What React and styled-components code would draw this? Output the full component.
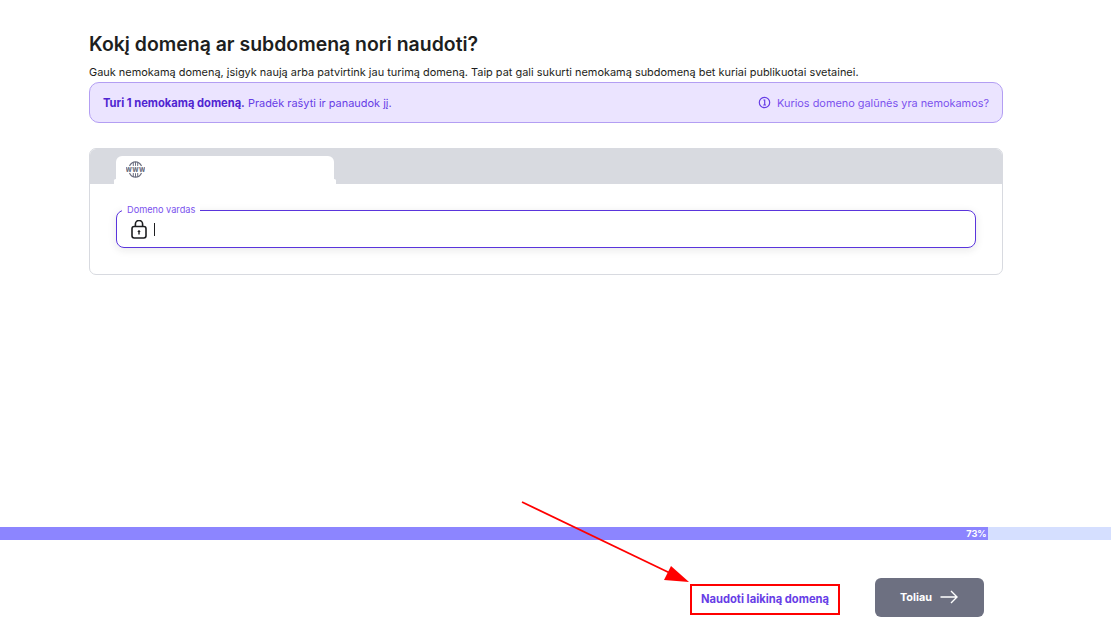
import React from "react";
import styled, { createGlobalStyle } from "styled-components";

const GlobalStyle = createGlobalStyle`
  html, body {
    margin: 0;
    padding: 0;
    background: #fff;
    font-family: "Inter", "Liberation Sans", sans-serif;
  }
  * { box-sizing: border-box; }
`;

const Page = styled.div`
  position: relative;
  height: 632px;
  display: flex;
  flex-direction: column;
  overflow: hidden;
`;

const Main = styled.main`
  flex: 1;
  padding: 32px 108px 0 89px;
`;

const Title = styled.h1`
  margin: 0;
  height: 25px;
  font-size: 19.45px;
  line-height: 25px;
  font-weight: 600;
  color: #1d1e20;
`;

const Subtitle = styled.p`
  margin: 8px 0 0;
  height: 17px;
  font-size: 10.95px;
  line-height: 15px;
  color: #1d1e20;
  white-space: nowrap;
`;

const Alert = styled.div`
  height: 41px;
  display: flex;
  align-items: center;
  justify-content: space-between;
  padding: 0 13px;
  background: #ebe4ff;
  border: 1px solid #b39ef3;
  border-radius: 10px;
  font-size: 10.95px;
  color: #673de6;
`;

const AlertText = styled.span`
  strong {
    font-size: 11.15px;
    font-weight: 700;
    color: #5025d1;
  }
`;

const AlertLink = styled.a`
  display: flex;
  align-items: center;
  gap: 6px;
  color: #7b52ee;
  font-size: 10.9px;
`;

const Card = styled.section`
  margin-top: 25px;
  height: 127px;
  border: 1px solid #d8dae0;
  border-radius: 7px;
  overflow: hidden;
`;

const TabBar = styled.div`
  height: 35px;
  padding: 7px 0 0 26px;
  background: #d8dae0;
`;

const Tab = styled.div`
  position: relative;
  width: 218px;
  height: 29px;
  padding: 4px 0 0 10px;
  background: #fff;
  border-radius: 6px 6px 0 0;

  &::before,
  &::after {
    content: "";
    position: absolute;
    bottom: 0;
    width: 3px;
    height: 6px;
    background: #fff;
    border-radius: 3px 3px 0 0;
  }
  &::before { left: -2px; }
  &::after { right: -2px; }
`;

const CardBody = styled.div`
  padding: 26px 26px 0;
`;

const Field = styled.div`
  position: relative;
  height: 38px;
  display: flex;
  align-items: center;
  gap: 7px;
  padding-left: 14px;
  border: 1px solid #5a35dc;
  border-radius: 8px;
  box-shadow: 0 2px 8px rgba(29, 30, 32, 0.1);
`;

const FieldLabel = styled.label`
  position: absolute;
  top: -7px;
  left: 5px;
  padding: 0 5px;
  background: #fff;
  font-size: 9.2px;
  line-height: 12px;
  color: #7b52ee;
`;

const Caret = styled.span`
  width: 1px;
  height: 13px;
  background: #1d1e20;
`;

const Progress = styled.div`
  height: 13px;
  background: #d5dfff;
`;

const ProgressFill = styled.div`
  height: 100%;
  padding-right: 1px;
  background: #8c85ff;
  color: #fff;
  font-size: 9.2px;
  line-height: 13px;
  font-weight: 700;
  text-align: right;
`;

const Footer = styled.footer`
  height: 92px;
  display: flex;
  align-items: flex-start;
  justify-content: flex-end;
  gap: 35px;
  padding: 38px 127px 0 0;
`;

const LaterLink = styled.a`
  width: 150px;
  height: 31px;
  margin-top: 6px;
  padding-bottom: 2px;
  display: flex;
  align-items: center;
  justify-content: center;
  border: 2px solid #f00;
  color: #673de6;
  font-size: 11.2px;
  font-weight: 700;
`;

const NextButton = styled.button`
  width: 109px;
  height: 39px;
  display: flex;
  align-items: center;
  justify-content: center;
  gap: 8px;
  padding: 0 1px 2px 0;
  border: 0;
  border-radius: 6px;
  background: #6d7081;
  color: #fff;
  font-family: inherit;
  font-size: 10.9px;
  font-weight: 700;
`;

const Annotation = styled.svg`
  position: absolute;
  left: 0;
  top: 0;
  pointer-events: none;
`;

const InfoIcon = () => (
  <svg width="13" height="13" viewBox="0 0 13 13" fill="none" stroke="#673de6">
    <circle cx="6.5" cy="6.5" r="5.2" strokeWidth="1.2" />
    <path d="M5.4 4h1.3v5M5.2 9h2.8" strokeWidth="1.2" />
  </svg>
);

const WwwIcon = () => (
  <svg width="19" height="19" viewBox="0 0 19 19" fill="none" stroke="#6d7081">
    <path d="M3.500 6C4.700 3.400 6.900 1.800 9.500 1.800s4.800 1.600 6 4.200M3.500 13c1.200 2.600 3.400 4.200 6 4.200s4.800-1.600 6-4.200" strokeWidth="1.200" />
    <path d="M7.300 6V2M11.700 6V2M9.500 5.800V1.800M7.300 13v4M11.700 13v4M9.500 13.200v4" strokeWidth="1" />
    <text x="9.500" y="11.800" textAnchor="middle" fontSize="6" letterSpacing="0.2" fontWeight="800" fill="#6d7081" stroke="none" fontFamily="Inter, sans-serif">WWW</text>
  </svg>
);

const LockIcon = () => (
  <svg width="16" height="19" viewBox="0 0 16 19" fill="none" stroke="#1d1e20">
    <rect x="1" y="6.500" width="14" height="11.500" rx="2.200" strokeWidth="1.600" />
    <path d="M4.400 6.500V4a3.600 3.600 0 0 1 7.200 0v2.500" strokeWidth="1.600" />
    <path d="M8 11.500v3" strokeWidth="1.400" />
    <path d="M6.300 12 8 9.700 9.700 12z" fill="#1d1e20" stroke="none" />
  </svg>
);

const ArrowIcon = () => (
  <svg width="18" height="14" viewBox="0 0 18 14" fill="none" stroke="#fff" strokeWidth="1.400">
    <path d="M0.500 7H17M11 1l6 6-6 6" />
  </svg>
);

const App = () => {
  return (
    <Page>
      <GlobalStyle />
      <Main>
        <Title>Kokį domeną ar subdomeną nori naudoti?</Title>
        <Subtitle>
          Gauk nemokamą domeną, įsigyk naują arba patvirtink jau turimą domeną. Taip pat gali sukurti nemokamą subdomeną bet kuriai publikuotai svetainei.
        </Subtitle>
        <Alert>
          <AlertText>
            <strong>Turi 1 nemokamą domeną.</strong> Pradėk rašyti ir panaudok jį.
          </AlertText>
          <AlertLink>
            <InfoIcon />
            Kurios domeno galūnės yra nemokamos?
          </AlertLink>
        </Alert>
        <Card>
          <TabBar>
            <Tab>
              <WwwIcon />
            </Tab>
          </TabBar>
          <CardBody>
            <Field>
              <FieldLabel>Domeno vardas</FieldLabel>
              <LockIcon />
              <Caret />
            </Field>
          </CardBody>
        </Card>
      </Main>
      <Progress>
        <ProgressFill style={{ width: "88.9%" }}>73%</ProgressFill>
      </Progress>
      <Footer>
        <LaterLink>Naudoti laikiną domeną</LaterLink>
        <NextButton>
          Toliau
          <ArrowIcon />
        </NextButton>
      </Footer>
      <Annotation width="1111" height="632" viewBox="0 0 1111 632">
        <path d="M522 502 672 574" stroke="#f00" strokeWidth="1.800" />
        <path d="M689 582 671 566 664 580z" fill="#f00" />
      </Annotation>
    </Page>
  );
};

export default App;
